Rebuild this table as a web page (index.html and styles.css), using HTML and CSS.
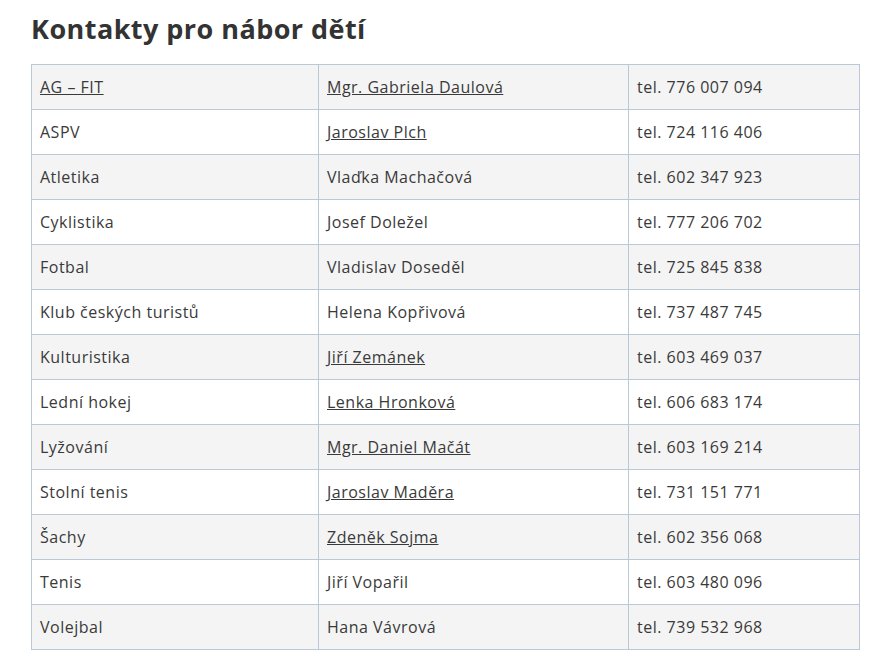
FILE: index.html
```html
<!DOCTYPE html>
<html lang="cs">
<head>
<meta charset="utf-8">
<title>Kontakty pro nábor dětí</title>
<link rel="stylesheet" href="styles.css">
</head>
<body>
<main class="content">
  <h2 class="title">Kontakty pro nábor dětí</h2>
  <table class="contacts">
    <colgroup><col class="c1"><col class="c2"><col class="c3"></colgroup>
    <tbody>
      <tr><td><a href="#">AG – FIT</a></td><td><a href="#">Mgr. Gabriela Daulová</a></td><td>tel. 776 007 094</td></tr>
      <tr><td>ASPV</td><td><a href="#">Jaroslav Plch</a></td><td>tel. 724 116 406</td></tr>
      <tr><td>Atletika</td><td>Vlaďka Machačová</td><td>tel. 602 347 923</td></tr>
      <tr><td>Cyklistika</td><td>Josef Doležel</td><td>tel. 777 206 702</td></tr>
      <tr><td>Fotbal</td><td>Vladislav Doseděl</td><td>tel. 725 845 838</td></tr>
      <tr><td>Klub českých turistů</td><td>Helena Kopřivová</td><td>tel. 737 487 745</td></tr>
      <tr><td>Kulturistika</td><td><a href="#">Jiří Zemánek</a></td><td>tel. 603 469 037</td></tr>
      <tr><td>Lední hokej</td><td><a href="#">Lenka Hronková</a></td><td>tel. 606 683 174</td></tr>
      <tr><td>Lyžování</td><td><a href="#">Mgr. Daniel Mačát</a></td><td>tel. 603 169 214</td></tr>
      <tr><td>Stolní tenis</td><td><a href="#">Jaroslav Maděra</a></td><td>tel. 731 151 771</td></tr>
      <tr><td>Šachy</td><td><a href="#">Zdeněk Sojma</a></td><td>tel. 602 356 068</td></tr>
      <tr><td>Tenis</td><td>Jiří Vopařil</td><td>tel. 603 480 096</td></tr>
      <tr><td>Volejbal</td><td>Hana Vávrová</td><td>tel. 739 532 968</td></tr>
    </tbody>
  </table>
</main>
</body>
</html>
```
FILE: styles.css
```css
html, body {
  margin: 0;
  padding: 0;
  background: #ffffff;
}
body {
  font-family: "Open Sans", "Noto Sans", sans-serif;
  color: #3a3a3a;
}
.content {
  padding: 12px 23px 0 31px;
}
.title {
  margin: 0 0 18px 0;
  font-size: 27px;
  line-height: 34px;
  font-weight: 700;
  color: #333333;
  letter-spacing: 0.45px;
}
.contacts {
  width: 828px;
  border-collapse: collapse;
  table-layout: fixed;
  font-size: 16px;
  letter-spacing: 0.5px;
}
.c1 { width: 287px; }
.c2 { width: 310px; }
.c3 { width: 231px; }
.contacts td {
  height: 45px;
  padding: 0 8px;
  border: 1px solid #b9c9d8;
  vertical-align: middle;
  box-sizing: border-box;
}
.contacts tr:nth-child(odd) td {
  background: #f4f4f4;
}
.contacts a {
  color: #3a3a3a;
  text-decoration: underline;
}
```
